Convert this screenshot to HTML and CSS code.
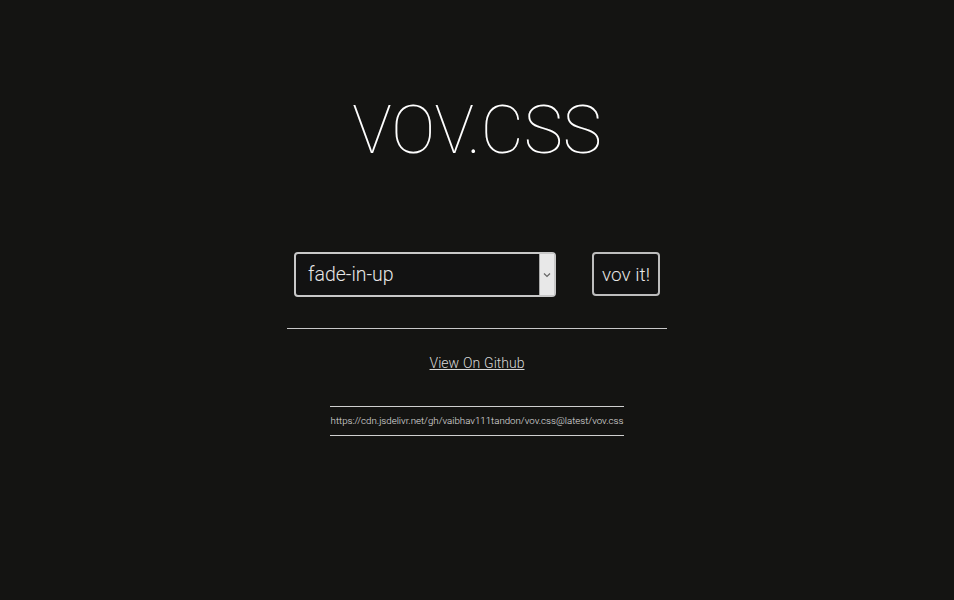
FILE: index.html
```html
<!DOCTYPE html>
<html>
<head>
<meta charset="utf-8">
<link rel="stylesheet" href="styles.css">
</head>
<body>
<main class="page">
  <h1 class="title">VOV.CSS</h1>
  <div class="controls">
    <div class="select">
      <span class="select-value">fade-in-up</span>
      <span class="select-arrow">
        <svg width="8" height="6" viewBox="0 0 8 6"><path d="M1 1.5 L4 4.5 L7 1.5" fill="none" stroke="#666" stroke-width="1.2"/></svg>
      </span>
    </div>
    <button class="vov-btn">vov it!</button>
  </div>
  <hr class="divider">
  <a class="gh-link" href="#">View On Github</a>
  <div class="cdn">https://cdn.jsdelivr.net/gh/vaibhav111tandon/vov.css@latest/vov.css</div>
</main>
</body>
</html>
```
FILE: styles.css
```css
html, body {
  margin: 0;
  padding: 0;
  background: #141412;
  height: 100%;
}
.page {
  display: flex;
  flex-direction: column;
  align-items: center;
  font-family: Roboto, "Liberation Sans", sans-serif;
  color: #eee;
}
.title {
  margin: 98px 0 0;
  font-size: 66px;
  line-height: 66px;
  font-weight: 100;
  color: #fff;
  letter-spacing: 0;
}
.controls {
  display: flex;
  gap: 36px;
  margin-top: 88px;
}
.select {
  box-sizing: border-box;
  width: 262px;
  height: 45px;
  border: 2px solid #c8c8c8;
  border-radius: 4px;
  display: flex;
  align-items: stretch;
  background: #121212;
}
.select-value {
  flex: 1;
  display: flex;
  align-items: center;
  padding-left: 12px;
  font-size: 19.5px;
  font-weight: 300;
  color: #e6e6e6;
}
.select-arrow {
  width: 14px;
  background: #e8e8e8;
  display: flex;
  align-items: center;
  justify-content: center;
  border-left: 1px solid #aaa;
}
.vov-btn {
  box-sizing: border-box;
  width: 68px;
  height: 44px;
  border: 2px solid #bdbdbd;
  border-radius: 4px;
  background: #121212;
  color: #e6e6e6;
  font-family: Roboto, "Liberation Sans", sans-serif;
  font-size: 19px;
  font-weight: 300;
  padding: 0;
}
.divider {
  width: 380px;
  margin: 31px 0 0;
  border: 0;
  border-top: 1px solid #c8c8c8;
  height: 0;
}
.gh-link {
  margin-top: 26px;
  font-size: 14px;
  font-weight: 300;
  color: #d8d8d8;
  text-decoration: underline;
  word-spacing: 0.5px;
}
.cdn {
  margin-top: 35px;
  width: 294px;
  box-sizing: border-box;
  border-top: 1px solid #cfcfcf;
  border-bottom: 1px solid #cfcfcf;
  padding: 8px 0 9px;
  font-size: 9.7px;
  font-weight: 300;
  color: #e0e0e0;
  text-align: center;
  white-space: nowrap;
}
```
